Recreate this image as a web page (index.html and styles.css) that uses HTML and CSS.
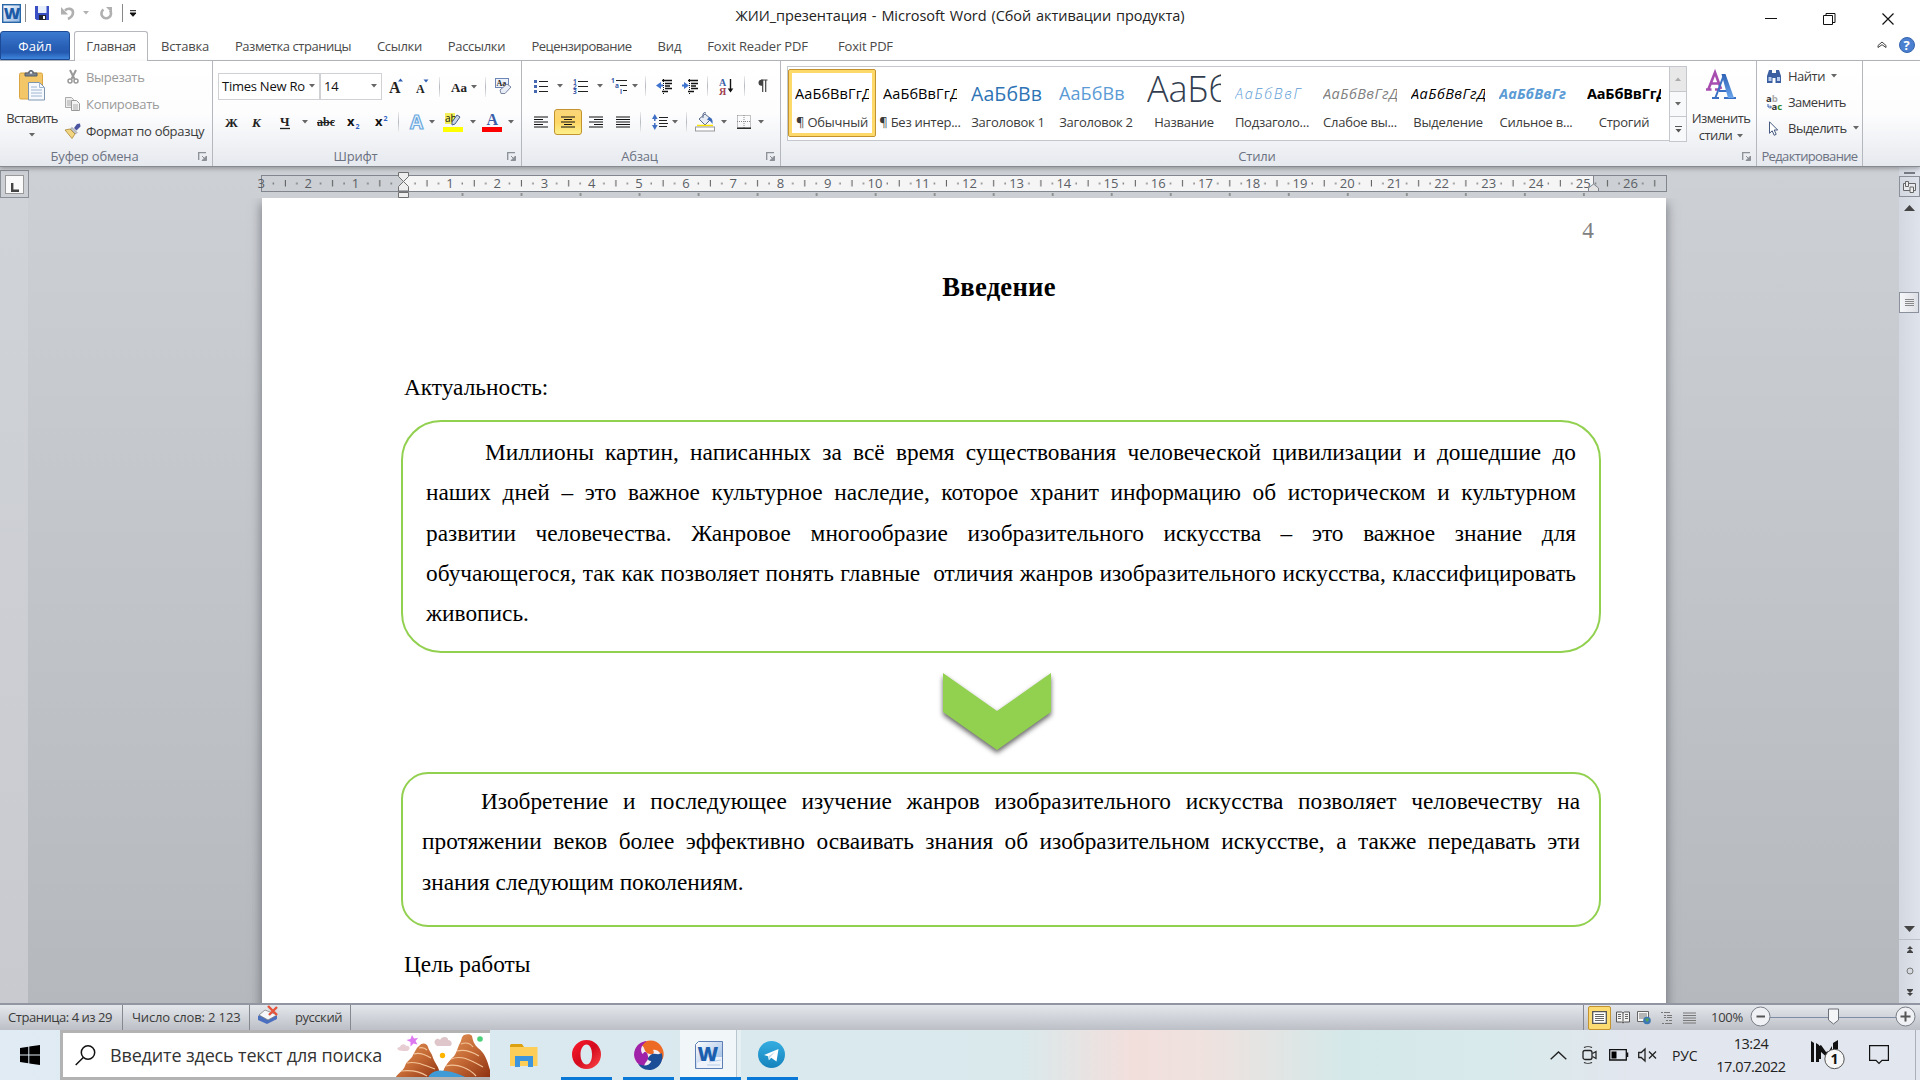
FILE: index.html
```html
<!DOCTYPE html>
<html lang="ru">
<head>
  <meta charset="UTF-8">
  <title>ЖИИ_презентация - Microsoft Word</title>
  <link rel="stylesheet" href="styles.css">
</head>
<body>
  <svg class="defs" width="0" height="0">
    <defs>
      <symbol id="caret" viewBox="0 0 6 4"><path d="M0 0h6L3 3.6z" fill="#666"/></symbol>
      <symbol id="launcher" viewBox="0 0 9 9"><path d="M.7 8V.7H8" fill="none" stroke="#8b8f96" stroke-width="1.3"/><path d="M4 4l3 3M8.5 4v4.5H4z" stroke="#8b8f96" fill="#8b8f96"/></symbol>
      <linearGradient id="wg" x1="0" y1="0" x2="1" y2="1"><stop offset="0" stop-color="#fff"/><stop offset="1" stop-color="#8fb3e0"/></linearGradient>
      <linearGradient id="rock" x1="0" y1="0" x2="1" y2="1"><stop offset="0" stop-color="#e59a5e"/><stop offset=".5" stop-color="#c56a35"/><stop offset="1" stop-color="#8c2f10"/></linearGradient>
      <linearGradient id="tg" x1="0" y1="0" x2="0" y2="1"><stop offset="0" stop-color="#35ade1"/><stop offset="1" stop-color="#1583bd"/></linearGradient>
      <linearGradient id="blueA" x1="0" y1="0" x2="0" y2="1"><stop offset="0" stop-color="#2f62b5"/><stop offset="1" stop-color="#6aa5ec"/></linearGradient>
      <linearGradient id="op" x1="0" y1="0" x2="1" y2="1"><stop offset="0" stop-color="#ff1b2d"/><stop offset=".5" stop-color="#d40a1e"/><stop offset="1" stop-color="#ff4a4a"/></linearGradient>
    </defs>
  </svg>

  <!-- Title bar -->
  <header class="titlebar">
    <div class="quick">
      <svg width="19" height="19" viewBox="0 0 19 19"><rect x=".7" y=".7" width="17.6" height="17.6" fill="url(#wg)" stroke="#2866a8" stroke-width="1.4"/><text x="1.800" y="15" class="wlogo">W</text></svg>
      <i class="vline"></i>
      <svg width="14" height="14" viewBox="0 0 14 14"><path d="M0 0h14v14H1.500L0 12.500z" fill="#3b4fc4"/><rect x="3" y="0" width="8.500" height="7" fill="#e8effc"/><rect x="4" y="9" width="7" height="5" fill="#20242e"/><rect x="8" y="10" width="2" height="3" fill="#fff"/></svg>
      <svg width="14" height="14" viewBox="0 0 14 14"><path d="M4 4.500c3-3 8-2 8 2 0 3-2 5-5 6.500" fill="none" stroke="#b0b0b0" stroke-width="2.600"/><path d="M0 1v7.500h7z" fill="#b0b0b0"/></svg>
      <svg width="6" height="4"><use href="#caret" opacity=".5"/></svg>
      <svg width="13" height="13" viewBox="0 0 13 13"><path d="M3.500 2.500a4.800 4.800 0 1 0 6.500 1" fill="none" stroke="#b0b0b0" stroke-width="2.600"/><path d="M6 0h6v6z" fill="#b0b0b0"/></svg>
      <i class="vline"></i>
      <svg width="8" height="7" viewBox="0 0 8 7"><path d="M1 .7h6M1 3h6L4 6.300z" fill="#111" stroke="#111"/></svg>
    </div>
    <div class="title">ЖИИ_презентация - Microsoft Word (Сбой активации продукта)</div>
    <div class="winbtns">
      <svg width="12" height="12"><path d="M0 5.500h12" stroke="#111"/></svg>
      <svg width="13" height="12"><path d="M.5 2.500h9v9h-9zM3 2.500V.5h9v9H9.500" fill="none" stroke="#111"/></svg>
      <svg width="12" height="12"><path d="M.5.5l11 11M11.500.5l-11 11" stroke="#111" stroke-width="1.200"/></svg>
    </div>
  </header>

  <nav class="tabs">
    <span class="tab file">Файл</span>
    <span class="tab active">Главная</span>
    <span class="tab t1">Вставка</span>
    <span class="tab t2">Разметка страницы</span>
    <span class="tab t3">Ссылки</span>
    <span class="tab t4">Рассылки</span>
    <span class="tab t5">Рецензирование</span>
    <span class="tab t6">Вид</span>
    <span class="tab t7">Foxit Reader PDF</span>
    <span class="tab t8">Foxit PDF</span>
    <div class="help">
      <svg width="10" height="8" viewBox="0 0 10 8"><path d="M1 4.500L5 1l4 3.500v2L5 3.700 1 6.500z" fill="#fff" stroke="#444"/></svg>
      <svg width="16" height="16" viewBox="0 0 16 16"><circle cx="8" cy="8" r="7.500" fill="#4a80cf" stroke="#3766b0"/><text x="4.600" y="12.800" class="qmark">?</text></svg>
    </div>
  </nav>

  <!-- Ribbon -->
  <section class="ribbon">
    <div class="group clipboard">
      <div class="body">
        <div class="paste">
          <svg width="27" height="31" viewBox="0 0 27 31"><rect x=".5" y="3" width="23" height="26" rx="1.500" fill="#f3c768" stroke="#d9a441"/><path d="M6 6V3h3.500a2.500 2.500 0 0 1 5 0H18v3z" fill="#7b8591" stroke="#555d68"/><circle cx="12" cy="2.800" r="1" fill="#fff"/><path d="M9.500 12.500h11l5 5V30h-16z" fill="#f6f9fd" stroke="#7f95ad"/><path d="M20.500 12.500v5h5M12 17h6M12 20h11M12 23h11M12 26h11" fill="none" stroke="#9fb6d0"/></svg>
          <span>Вставить</span>
          <svg width="6" height="4"><use href="#caret"/></svg>
        </div>
        <div class="clip-list">
          <div class="off"><svg width="16" height="16" viewBox="0 0 16 16"><path d="M5 1l4.500 9M11 1L6.500 10" stroke="#999" stroke-width="2" fill="none"/><circle cx="5" cy="12" r="2" fill="none" stroke="#999" stroke-width="1.500"/><circle cx="11" cy="12" r="2" fill="none" stroke="#999" stroke-width="1.500"/></svg><span>Вырезать</span></div>
          <div class="off"><svg width="16" height="16" viewBox="0 0 16 16"><path d="M.5 1.500h6l2 2v8h-8z" fill="#eee" stroke="#aaa"/><path d="M6.500 4.500h5l3 3v7h-8z" fill="#f4f4f4" stroke="#999"/><path d="M2 5h4M2 7h4M2 9h4M8 9h5M8 11h5M8 13h5" stroke="#aaa"/></svg><span>Копировать</span></div>
          <div><svg width="16" height="16" viewBox="0 0 16 16"><path d="M9 5l3-4 3-.5.5 3-4 4z" fill="#4b55a0"/><path d="M7 4.500l5 5-1.500 1.500-5-5z" fill="#c9cdd6" stroke="#666" stroke-width=".6"/><path d="M0 7l5-1 5 5-3 4.500z" fill="#f2d580" stroke="#a98636" stroke-width=".8"/></svg><span>Формат по образцу</span></div>
        </div>
      </div>
      <div class="caption"><span>Буфер обмена</span><svg width="9" height="9"><use href="#launcher"/></svg></div>
    </div>

    <div class="group font">
      <div class="body rows">
        <div class="frow1">
          <div class="combo"><span>Times New Ro</span><svg width="6" height="4"><use href="#caret"/></svg></div>
          <div class="combo small"><span>14</span><svg width="6" height="4"><use href="#caret"/></svg></div>
          <svg width="16" height="18" viewBox="0 0 16 18"><text x="0" y="15" class="sb f16">A</text><path d="M9 3.500h5L11.500.5z" fill="#2f5fb3"/></svg>
          <svg width="14" height="18" viewBox="0 0 14 18"><text x="0" y="15" class="sb f12">A</text><path d="M7.500 1.500h5l-2.500 3z" fill="#2f5fb3"/></svg>
          <i class="sep"></i>
          <svg width="18" height="16" viewBox="0 0 18 16"><text x="0" y="13" class="sb f13">Aa</text></svg>
          <svg width="6" height="4"><use href="#caret"/></svg>
          <i class="sep"></i>
          <svg width="18" height="17" viewBox="0 0 18 17"><rect x=".5" y=".5" width="13" height="9" fill="#eef3fb" stroke="#6d86b5"/><text x="1.500" y="8.300" class="sb f8">Aa</text><path d="M5 12l7-6 4 3-6 6.500H6z" fill="#e9edf5" stroke="#7a86a0"/></svg>
        </div>
        <div class="frow2">
          <svg width="16" height="16" viewBox="0 0 16 16"><text x="0" y="12.500" class="sb f13">Ж</text></svg>
          <svg width="16" height="16" viewBox="0 0 16 16"><text x="0" y="12.500" class="sb f13 it">К</text></svg>
          <svg width="14" height="16" viewBox="0 0 14 16"><text x="0" y="12" class="sb f13">Ч</text><path d="M0 14.500h10" stroke="#222" stroke-width="1.300"/></svg>
          <svg width="6" height="4"><use href="#caret"/></svg>
          <svg width="18" height="16" viewBox="0 0 18 16"><text x="0" y="12" class="sb f11">abc</text><path d="M0 8.500h17" stroke="#222"/></svg>
          <svg width="14" height="16" viewBox="0 0 14 16"><text x="0" y="12" class="xb">x</text><text x="8.500" y="15" class="idx">2</text></svg>
          <svg width="14" height="16" viewBox="0 0 14 16"><text x="0" y="12" class="xb">x</text><text x="8.500" y="7" class="idx">2</text></svg>
          <i class="sep"></i>
          <svg width="16" height="17" viewBox="0 0 16 17"><text x="1" y="15" class="glow">A</text></svg>
          <svg width="6" height="4"><use href="#caret"/></svg>
          <svg width="20" height="20" viewBox="0 0 20 20"><rect x="2" y="1" width="10" height="11" fill="#f3ef5a"/><text x="2" y="10" class="hl">ab</text><path d="M9 10l5-7 3 2-5 7-3 1z" fill="#cbd8ec" stroke="#4a5e85"/><rect x="0" y="15" width="20" height="5" fill="#ff0"/></svg>
          <svg width="6" height="4"><use href="#caret"/></svg>
          <svg width="20" height="20" viewBox="0 0 20 20"><text x="4.500" y="12.500" class="sb f16 blue">A</text><rect x="0" y="15" width="20" height="5" fill="#f00"/></svg>
          <svg width="6" height="4"><use href="#caret"/></svg>
        </div>
      </div>
      <div class="caption"><span>Шрифт</span><svg width="9" height="9"><use href="#launcher"/></svg></div>
    </div>

    <div class="group para">
      <div class="body rows">
        <div class="prow1">
          <svg width="14" height="14" viewBox="0 0 14 14"><path d="M5 2.500h9M5 7.500h9M5 12.500h9" stroke="#222"/><path d="M0 1h3v3H0zM0 6h3v3H0zM0 11h3v3H0z" fill="#4668b0"/></svg>
          <svg width="6" height="4"><use href="#caret"/></svg>
          <svg width="15" height="15" viewBox="0 0 15 15"><path d="M5 2.500h10M5 7.500h10M5 12.500h10" stroke="#222"/><text x="0" y="4.500" class="num">1</text><text x="0" y="9.700" class="num">2</text><text x="0" y="15" class="num">3</text></svg>
          <svg width="6" height="4"><use href="#caret"/></svg>
          <svg width="17" height="16" viewBox="0 0 17 16"><path d="M5 2.500h11M9 7.500h7M12 12.500h4" stroke="#222"/><text x="0" y="5" class="num">1</text><text x="4" y="10" class="num">a</text><text x="9" y="15.500" class="num">i</text></svg>
          <svg width="6" height="4"><use href="#caret"/></svg>
          <i class="sep"></i>
          <svg width="16" height="15" viewBox="0 0 16 15"><path d="M6 1.500h10M9 4.500h7M9 7h5M9 9.500h7M6 12.500h6" stroke="#111" stroke-width="1.500"/><path d="M7.500 0v15" stroke="#111" stroke-dasharray="1 1"/><path d="M5 3L0 6.500 5 10z" fill="#3f74cf"/><path d="M4 6.500h3" stroke="#3f74cf" stroke-width="2"/></svg>
          <svg width="16" height="15" viewBox="0 0 16 15"><path d="M6 1.500h10M9 4.500h7M9 7h5M9 9.500h7M6 12.500h6" stroke="#111" stroke-width="1.500"/><path d="M7.500 0v15" stroke="#111" stroke-dasharray="1 1"/><path d="M2 3l5 3.500L2 10z" fill="#3f74cf"/><path d="M0 6.500h3" stroke="#3f74cf" stroke-width="2"/></svg>
          <i class="sep"></i>
          <svg width="15" height="17" viewBox="0 0 15 17"><text x="0" y="8" class="sb f10 blue">А</text><text x="0" y="16.500" class="sb f10 red">Я</text><path d="M11.500 1v12" stroke="#111" stroke-width="1.400"/><path d="M8.700 10.500h5.600l-2.800 4z" fill="#111"/></svg>
          <i class="sep"></i>
          <svg width="11" height="14" viewBox="0 0 11 14"><path d="M4.500.8a3 3 0 0 0 0 6H6v-6z" fill="#444"/><path d="M4 1h6.500M5.700 1v12M8.700 1v12" fill="none" stroke="#444" stroke-width="1.200"/></svg>
        </div>
        <div class="prow2">
          <svg width="14" height="13" viewBox="0 0 14 13"><path d="M0 1h14M0 3.500h9M0 6h14M0 8.500h9M0 11h14" stroke="#111" stroke-width="1.200"/></svg>
          <span class="pressed"><svg width="14" height="13" viewBox="0 0 14 13"><path d="M0 1h14M3 3.500h8M0 6h14M3 8.500h8M0 11h14" stroke="#111" stroke-width="1.200"/></svg></span>
          <svg width="14" height="13" viewBox="0 0 14 13"><path d="M0 1h14M5 3.500h9M0 6h14M5 8.500h9M0 11h14" stroke="#111" stroke-width="1.200"/></svg>
          <svg width="14" height="13" viewBox="0 0 14 13"><path d="M0 1h14M0 3.500h14M0 6h14M0 8.500h14M0 11h14" stroke="#111" stroke-width="1.200"/></svg>
          <i class="sep"></i>
          <svg width="16" height="16" viewBox="0 0 16 16"><path d="M7 3.500h9M7 6.500h8M7 9.500h9M7 12.500h8" stroke="#222"/><path d="M0 5l2.800-5 2.800 5zM0 11l2.800 5 2.800-5z" fill="#3f6fc4"/><path d="M2.800 4v8" stroke="#3f6fc4" stroke-width="1.500" stroke-dasharray="3 2"/></svg>
          <svg width="6" height="4"><use href="#caret"/></svg>
          <i class="sep"></i>
          <svg width="20" height="20" viewBox="0 0 20 20"><path d="M4 7l6-5 6 5-6 6z" fill="#e7ebf3" stroke="#5a6a8c"/><path d="M8 6V2a2 2 0 0 1 3-1" fill="none" stroke="#5a6a8c"/><path d="M14 5c3 1 4 3 3.500 7-1.500-2-2.500-4-5.500-4z" fill="#3d6bb8"/><path d="M2 13.500h16" stroke="#ffe600" stroke-width="1.500"/><rect x=".5" y="15" width="19" height="4" fill="#fff" stroke="#999"/></svg>
          <svg width="6" height="4"><use href="#caret"/></svg>
          <svg width="14" height="14" viewBox="0 0 14 14"><path d="M.5.500h13v12M.5.500v12M7 0v13M0 6.500h13" fill="none" stroke="#888" stroke-dasharray="1 1"/><path d="M0 13.200h14" stroke="#222" stroke-width="1.500"/></svg>
          <svg width="6" height="4"><use href="#caret"/></svg>
        </div>
      </div>
      <div class="caption"><span>Абзац</span><svg width="9" height="9"><use href="#launcher"/></svg></div>
    </div>

    <div class="group styles">
      <div class="body">
        <div class="gallery">
          <div class="style on"><b class="pv">АаБбВвГгД</b><span>¶ Обычный</span></div>
          <div class="style"><b class="pv">АаБбВвГгД</b><span>¶ Без интер...</span></div>
          <div class="style"><b class="pv h1">АаБбВв</b><span>Заголовок 1</span></div>
          <div class="style"><b class="pv h2">АаБбВв</b><span>Заголовок 2</span></div>
          <div class="style"><b class="pv name">АаБб</b><span>Название</span></div>
          <div class="style"><b class="pv sub">АаБбВвГ</b><span>Подзаголо...</span></div>
          <div class="style"><b class="pv weak">АаБбВвГгД</b><span>Слабое вы...</span></div>
          <div class="style"><b class="pv em">АаБбВвГгД</b><span>Выделение</span></div>
          <div class="style"><b class="pv strong">АаБбВвГг</b><span>Сильное в...</span></div>
          <div class="style"><b class="pv strict">АаБбВвГгД</b><span>Строгий</span></div>
        </div>
        <div class="scroller">
          <i class="dim"><svg width="6" height="4" viewBox="0 0 6 4"><path d="M0 4h6L3 .4z" fill="#aaa"/></svg></i>
          <i><svg width="6" height="4"><use href="#caret"/></svg></i>
          <i><svg width="7" height="7" viewBox="0 0 7 7"><path d="M0 .5h7" stroke="#555"/><path d="M.5 3h6l-3 3.600z" fill="#555"/></svg></i>
        </div>
        <div class="change">
          <svg width="30" height="29" viewBox="0 0 30 29"><path d="M0 18.500h5.500M9 18.500h5M2.500 18L9 1.500 15 18M5 12.500h7" fill="none" stroke="#a84db0" stroke-width="2.600"/><path d="M6 27h7M18 27h12M9.500 26.500L17.500 5M13 20h9" fill="none" stroke="#3a70c4" stroke-width="2"/><path d="M15.500 3h4l8.500 24h-6z" fill="url(#blueA)"/></svg>
          <span>Изменить</span>
          <span>стили <svg width="6" height="4"><use href="#caret"/></svg></span>
        </div>
      </div>
      <div class="caption"><span>Стили</span><svg width="9" height="9"><use href="#launcher"/></svg></div>
    </div>

    <div class="group edit">
      <div class="body edit-list">
        <div><svg width="16" height="15" viewBox="0 0 16 15"><path d="M3 1h3v3h4V1h3l2 6v7H9.500V9h-3v5H1V7z" fill="#3b5fa0"/><path d="M2.500 8h3v4h-3zM11 8h3v4h-3z" fill="#b9cdec"/></svg><span>Найти</span><svg width="6" height="4"><use href="#caret"/></svg></div>
        <div><svg width="16" height="15" viewBox="0 0 16 15"><text x="0" y="6.500" class="rep">a<tspan fill="#aaa">b</tspan></text><text x="5.500" y="14.500" class="rep">a<tspan fill="#2d8a2d">c</tspan></text><path d="M2 9v3h3M4 10.500L5.500 12 4 13.500" fill="none" stroke="#3560b0"/></svg><span>Заменить</span></div>
        <div><svg width="16" height="15" viewBox="0 0 16 15"><path d="M3.500.8v11.500l2.700-2.500 2 4.500 2-1-2-4.300h3.500z" fill="#fff" stroke="#45597f"/></svg><span>Выделить</span><svg width="6" height="4"><use href="#caret"/></svg></div>
      </div>
      <div class="caption"><span>Редактирование</span></div>
    </div>
  </section>

  <!-- Document area -->
  <main class="workspace">
    <div class="leftcol">
      <div class="tabstop"><i><svg width="8" height="9"><path d="M1.200 0v7.700H8" fill="none" stroke="#444" stroke-width="2.400"/></svg></i></div>
      <div class="vruler"></div>
    </div>
    <div class="center">
      <div class="rulerwrap">
        <svg class="rulerbar" width="1420" height="31" viewBox="248 167 1420 31">
          <defs><pattern id="ticks" x="403" y="175" width="47.22" height="17" patternUnits="userSpaceOnUse"><path d="M12 7.500v2M24 5v6.500M35.500 7.500v2" stroke="#555"/></pattern>
          <pattern id="tabsteps" x="433" y="192" width="59.020" height="6" patternUnits="userSpaceOnUse"><path d="M29.500 1v3" stroke="#555"/></pattern></defs>
          <rect x="403" y="175.500" width="1190" height="16" fill="#f5f5f6"/>
          <rect x="261.500" y="175.500" width="1405" height="16" fill="none" stroke="#80858e"/>
          <rect x="264" y="175" width="1394" height="17" fill="url(#ticks)"/>
          <rect x="455" y="192" width="1140" height="6" fill="url(#tabsteps)"/>
          <path d="M1593.500 175v16" stroke="#80858e"/>
        </svg>
        <div class="nums"><span>3</span><span>2</span><span>1</span><span></span><span>1</span><span>2</span><span>3</span><span>4</span><span>5</span><span>6</span><span>7</span><span>8</span><span>9</span><span>10</span><span>11</span><span>12</span><span>13</span><span>14</span><span>15</span><span>16</span><span>17</span><span>18</span><span>19</span><span>20</span><span>21</span><span>22</span><span>23</span><span>24</span><span>25</span><span>26</span></div>
        <svg class="rulerbar" width="1420" height="31" viewBox="248 167 1420 31"><path d="M398.500 172.500h10v4l-5 5-5-5zM403.500 181.500l5 5v4.500h-10v-4.500zM398.500 192.500h10v5h-10z" fill="#eee" stroke="#707070"/><path d="M1593.500 184l5 4v3.500h-10V188z" fill="#e4e4e4" stroke="#80858e"/></svg>
      </div>
      <div class="page">
        <div class="pageno">4</div>
        <h1>Введение</h1>
        <p class="lead">Актуальность:</p>
        <div class="box box1">
          <div class="ln first">Миллионы картин, написанных за всё время существования человеческой цивилизации и дошедшие до</div>
          <div class="ln">наших дней – это важное культурное наследие, которое хранит информацию об историческом и культурном</div>
          <div class="ln">развитии человечества. Жанровое многообразие изобразительного искусства – это важное знание для</div>
          <div class="ln">обучающегося, так как позволяет понять главные &nbsp;отличия жанров изобразительного искусства, классифицировать</div>
          <div class="ln last">живопись.</div>
        </div>
        <svg class="arrow" width="130" height="95" viewBox="0 0 130 95"><path d="M11 10l54 38 54-38v39l-54 38-54-38z" fill="#92d050"/></svg>
        <div class="box box2">
          <div class="ln first">Изобретение и последующее изучение жанров изобразительного искусства позволяет человечеству на</div>
          <div class="ln">протяжении веков более эффективно осваивать знания об изобразительном искусстве, а также передавать эти</div>
          <div class="ln last">знания следующим поколениям.</div>
        </div>
        <p class="goal">Цель работы</p>
      </div>
    </div>
    <div class="vscroll">
      <i class="split"></i>
      <div class="rulerbtn"><svg width="13" height="12" viewBox="0 0 13 12"><path d="M.5 2.500h12v7H.5z" fill="#e9eaee" stroke="#666"/><path d="M2.500.500h3v5h-3zM7 6h3.500v5.500H7z" fill="#eee" stroke="#666"/></svg></div>
      <svg class="up" width="11" height="6"><path d="M0 6L5.500 0 11 6z" fill="#444"/></svg>
      <div class="thumb"><svg width="9" height="8"><path d="M0 .5h9M0 2.500h9M0 4.500h9M0 6.500h9" stroke="#888"/></svg></div>
      <svg class="down" width="11" height="6"><path d="M0 0h11L5.500 6z" fill="#444"/></svg>
      <div class="browse">
        <svg width="6" height="7"><path d="M0 3l3-3 3 3zM0 6l3-3 3 3zM0 6h6v1H0z" fill="#444"/></svg>
        <svg width="8" height="8"><circle cx="4" cy="4" r="3" fill="#d5d8de" stroke="#777"/></svg>
        <svg width="6" height="7"><path d="M0 4l3 3 3-3zM0 1l3 3 3-3zM0 0h6v1H0z" fill="#444"/></svg>
      </div>
    </div>
  </main>

  <footer class="status">
    <span class="st pg">Страница: 4 из 29</span>
    <span class="st wc">Число слов: 2 123</span>
    <span class="st lang"><svg width="21" height="19" viewBox="0 0 21 19"><path d="M0 11l7-5 4 2 8 3v3l-10 5-9-4z" fill="#4a6fc0"/><path d="M1 10l6-5 5 2 7 3-9 5z" fill="#f5f7fb" stroke="#777" stroke-width=".7"/><path d="M10 1l9 9M19 2l-8 8" stroke="#e5533a" stroke-width="2.400"/></svg><em>русский</em></span>
    <div class="views">
      <span class="vbtn"><svg width="15" height="13" viewBox="0 0 15 13"><path d="M.7.700h13.600v11.600H.7z" fill="#fff" stroke="#555" stroke-width="1.300"/><path d="M3 3.500h9M3 5.500h9M3 7.500h9M3 9.500h9" stroke="#666"/></svg></span>
      <svg width="14" height="13" viewBox="0 0 14 13"><path d="M.5 1h5L7 2l1.500-1h5v10h-5L7 12l-1.500-1h-5zM7 2v10" fill="#f3f3f3" stroke="#555"/><path d="M2 3.500h3M2 5.500h3M2 7.500h3M9 3.500h3M9 5.500h3M9 7.500h3" stroke="#666"/></svg>
      <svg width="15" height="14" viewBox="0 0 15 14"><path d="M.5.500h11v10H.5z" fill="#f6f6f6" stroke="#666"/><path d="M2 3h8M2 5h8M2 7h6" stroke="#777"/><circle cx="10" cy="9.500" r="3.800" fill="#3b78b5"/><path d="M8 8l3-1 1 2-2 2z" fill="#56a356"/></svg>
      <svg width="12" height="12" viewBox="0 0 12 12"><path d="M0 .5h2M3 .5h6M3 3.500h2M6 3.500h5M3 5.500h2M6 5.500h5M5 8.500h2M8 8.500h3M1 11.500h2M4 11.500h7" stroke="#777"/></svg>
      <svg width="13" height="12" viewBox="0 0 13 12"><path d="M0 1h13M0 3.500h13M0 6h13M0 8.500h13M0 11h13" stroke="#777"/></svg>
    </div>
    <span class="pct">100%</span>
    <svg class="zoom" width="170" height="26" viewBox="0 0 170 26"><path d="M22 12.500h126" stroke="#7d8da5"/><circle cx="12.500" cy="11.500" r="9.500" fill="#f0f1f4" stroke="#7a7f88"/><path d="M8.500 11.500h8.500" stroke="#555" stroke-width="2"/><circle cx="157.500" cy="11.500" r="9.500" fill="#f0f1f4" stroke="#7a7f88"/><path d="M152.500 11.500h10M157.500 6.500v10" stroke="#555" stroke-width="2"/><path d="M80.500 4h10v11l-5 4-5-4z" fill="#f4f5f7" stroke="#6c7078"/></svg>
  </footer>

  <!-- Taskbar -->
  <div class="taskbar">
    <div class="start"><svg width="20" height="20" viewBox="0 0 20 20"><path d="M0 3l8.300-1.200v7.700H0zM9.300 1.600L20 0v9.500H9.300zM0 10.500h8.300v7.700L0 17zM9.300 10.500H20V20L9.300 18.400z"/></svg></div>
    <div class="search">
      <svg width="21" height="21" viewBox="0 0 21 21"><circle cx="13" cy="7.500" r="6.700" fill="none" stroke="#111" stroke-width="1.500"/><path d="M8.300 12.500L.7 20" stroke="#111" stroke-width="1.500"/></svg>
      <span>Введите здесь текст для поиска</span>
      <svg class="art" width="95" height="47" viewBox="0 0 95 47">
        <path d="M9 19c-8 0-8-4-4-4 1-4 6-3 6-1 4-1 5 4 1 5z" fill="#e6ced2"/>
        <path d="M40 12c-2-4 3-7 5-4 2-5 9-3 8 0 4 0 5 5 2 6H42z" fill="#dfc6ca"/>
        <path d="M17 3l2 3.500 4-.5-2.500 3 2 3.500-4-1-3 3v-4.500L11.500 8l4-1z" fill="#dc78f0"/>
        <circle cx="85" cy="7" r="2.800" fill="#4bd07a"/><circle cx="47.500" cy="23.500" r="2.700" fill="#ffb400"/>
        <path d="M0 47c2-6 8-7 10-13 2-6 6-6 8-11 2-3 3-7 6-9 3-4 8-3 9 1 1 4 4 6 5 11 2 5 5 8 6 12v9z" fill="url(#rock)"/>
        <path d="M47 47c0-11 6-16 10-21 5-4 5-10 8-15 2-3 1-6 4-8 3-1 7-1 8 1 1 5 2 8 6 12 7 5 9 12 12 22v9z" fill="url(#rock)"/>
        <path d="M24 16c4-1 6 0 8 2M19 22c6-2 12 1 17 4M12 31c9-2 17 2 28 6M6 39c8-1 18 0 26 5M66 12c5-2 9-1 12 3M62 19c8-2 14 0 22 5M56 27c10-4 18 0 32 8M51 34c12-3 24 3 30 10" fill="none" stroke="#f3c398" stroke-width="1.200"/>
        <path d="M33 47c1-7 9-10 18-8 8 1 16 4 23 8z" fill="#3f9ad6"/>
      </svg>
    </div>
    <div class="apps">
      <div class="app"><svg width="28" height="25" viewBox="0 0 28 25"><path d="M0 2.500A1.500 1.500 0 0 1 1.500 1H12l2 3H0z" fill="#dda010"/><rect x="0" y="4" width="27.500" height="19" fill="#fdcf59"/><path d="M5 24V13h18v11h-5v-6h-8v6z" fill="#3d95dd"/></svg></div>
      <div class="app run"><svg width="29" height="29" viewBox="0 0 29 29"><path fill-rule="evenodd" d="M14.500 0a14.500 14.500 0 1 0 0 29 14.500 14.500 0 0 0 0-29zm0 4.500c3.500 0 5.500 4.500 5.500 10s-2 10-5.500 10-6-4.500-6-10 2.500-10 6-10z" fill="url(#op)"/></svg></div>
      <div class="app run">
        <svg width="30" height="30" viewBox="-15 -15 30 30">
          <circle r="14.800" fill="#f3ecf0"/>
          <path d="M-8-10C-3-16 7-16 12-9c4 6 3 11 1 14 0-6-4-11-9-10 2 3 0 5-3 4C-6-2-3-8-8-10z" fill="#ec6a24"/>
          <path d="M-8-10C-3-16 7-16 12-9c4 6 3 11 1 14 0-6-4-11-9-10 2 3 0 5-3 4C-6-2-3-8-8-10z" fill="#a022a8" transform="rotate(-120)"/>
          <path d="M-8-10C-3-16 7-16 12-9c4 6 3 11 1 14 0-6-4-11-9-10 2 3 0 5-3 4C-6-2-3-8-8-10z" fill="#1c4e97" transform="rotate(120)"/>
        </svg>
      </div>
      <div class="app run current"><svg width="28" height="28" viewBox="0 0 28 28"><path d="M3.500.500h24v27H.5v-24z" fill="url(#wg)" stroke="#5d7fb3"/><path d="M14 16h13v11H2V22z" fill="#eef3fb"/><path d="M15 17l11-3M14 21l12-2M12 24l13 0" stroke="#b8cdea"/><text x="2.500" y="19.500" class="wbig">W</text></svg></div>
      <div class="app run tele"><svg width="27" height="27" viewBox="0 0 27 27"><circle cx="13.500" cy="13.500" r="13.500" fill="url(#tg)"/><path d="M6 14L20.500 8 18.500 20.500l-5.300-3.700-2.300 2.500-.9-4z" fill="#fff"/><path d="M10.500 15.300l7-5-5.300 6-1.200 2.500z" fill="#bcdcee"/></svg></div>
    </div>
    <div class="tray">
      <svg width="17" height="9"><path d="M.7 8.300L8.500 1l7.800 7.300" fill="none" stroke="#222" stroke-width="1.400"/></svg>
      <svg width="15" height="18" viewBox="0 0 15 18"><rect x="1" y="4.500" width="9" height="9" rx="2" fill="none" stroke="#222" stroke-width="1.300"/><path d="M10.500 7.500l3.500-2v7l-3.500-2M2 1.500C4 .5 8 .5 10 1.500M2 16.500c2 1 6 1 8 0" fill="none" stroke="#222" stroke-width="1.200"/></svg>
      <svg width="20" height="12" viewBox="0 0 20 12"><path d="M.7.700h16.600v10.300H.7z" fill="none" stroke="#111" stroke-width="1.300"/><path d="M18.500 3.500v4.500" stroke="#111" stroke-width="1.500"/><rect x="2.500" y="2.500" width="5" height="7"/></svg>
      <svg width="20" height="14" viewBox="0 0 20 14"><path d="M.7 4.500h2.500L7 1v12L3.200 9.500H.7z" fill="none" stroke="#222" stroke-width="1.300"/><path d="M11 3.500l7 7M18 3.500l-7 7" stroke="#222" stroke-width="1.300"/></svg>
      <span class="kb">РУС</span>
      <div class="clock"><span>13:24</span><span>17.07.2022</span></div>
      <svg width="34" height="30" viewBox="0 0 34 30"><path d="M0 1l3 2v19H0zM5 3l3 2v17H5zM10 5l5 7 3-1 3-5v5l-2 9-9-8v7h-2V6zM22 3l5-3v9l-5 4z" fill="#111"/><circle cx="23.500" cy="19" r="9.700" fill="#f7f7f7" stroke="#555"/><text x="19.600" y="24.300" class="badge">1</text></svg>
      <svg width="20" height="20" viewBox="0 0 20 20"><path d="M.6.600h18.800v14.800h-6.400L10 18.500 7 15.400H.6z" fill="none" stroke="#111" stroke-width="1.200"/></svg>
      <i class="desk"></i>
    </div>
  </div>
</body>
</html>
```
FILE: styles.css
```css
* {
  box-sizing: border-box;
}
body {
  margin: 0;
  width: 1920px;
  height: 1080px;
  overflow: hidden;
  display: flex;
  flex-direction: column;
  background: #fff;
  font-family: "Open Sans", "Noto Sans", sans-serif;
  font-size: 13px;
  color: #3b3b3b;
  white-space: nowrap;
}
svg {
  display: block;
  flex: none;
  overflow: visible;
}
.defs {
  height: 0;
}
i, em {
  font-style: normal;
}

/* title bar */
.titlebar {
  height: 31px;
  display: grid;
  grid-template-columns: 560px 800px 560px;
}
.quick {
  display: grid;
  grid-template-columns: 23px 10px 26px 22px 17px 22px 7px 10px;
  align-items: center;
  height: 26px;
  padding-left: 2px;
}
.vline {
  width: 1px;
  height: 18px;
  background: #888;
}
.title {
  text-align: center;
  font-size: 14.5px;
  line-height: 32px;
  letter-spacing: -.05px;
  word-spacing: 1.2px;
  color: #222;
}
.winbtns {
  display: flex;
  justify-content: flex-end;
  align-items: center;
  gap: 46px;
  padding: 5px 26px 0 0;
}
.wlogo {
  font: 800 16px "Open Sans", sans-serif;
  fill: #1c5aa6;
}
.qmark {
  font: bold 13px "Open Sans", sans-serif;
  fill: #fff;
}

/* tabs */
.tabs {
  height: 30px;
  display: flex;
  border-bottom: 1px solid #b5b9be;
}
.tab {
  line-height: 31px;
  flex: none;
  text-align: center;
  color: #4a4a4a;
}
.file {
  width: 70px;
  color: #fff;
  border: 1px solid #1c4a96;
  border-radius: 3px 3px 0 0;
  background: linear-gradient(#3c7bd0, #2a62b8 50%, #2459b0 75%, #3f86dd);
  line-height: 29px;
}
.active {
  width: 74px;
  height: 30px;
  margin-left: 4px;
  border: 1px solid #b5b9be;
  border-bottom: 0;
  border-radius: 3px 3px 0 0;
  background: #fff;
  line-height: 29px;
  letter-spacing: -.3px;
}
.t1 { width: 74px; letter-spacing: -.2px; }
.t2 { width: 142px; letter-spacing: -.45px; }
.t3 { width: 71px; letter-spacing: -.3px; }
.t4 { width: 83px; letter-spacing: -.3px; }
.t5 { width: 127px; letter-spacing: -.55px; }
.t6 { width: 49px; }
.t7 { width: 127px; letter-spacing: -.15px; }
.t8 { width: 89px; letter-spacing: -.2px; }
.help {
  margin-left: auto;
  display: flex;
  align-items: center;
  gap: 12px;
  padding: 0 5px 2px 0;
}

/* ribbon */
.ribbon {
  height: 106px;
  display: flex;
  background: linear-gradient(#fff, #fdfdfe 50%, #e6e9ee);
  border-bottom: 1px solid #868b92;
  box-shadow: 0 2px 4px rgba(0, 0, 0, .25);
  position: relative;
}
.group {
  display: flex;
  flex-direction: column;
  border-right: 1px solid #b4b8be;
}
.clipboard { width: 213px; }
.font { width: 309px; }
.para { width: 259px; }
.styles { width: 976px; }
.edit { width: 106px; }
.body {
  height: 86px;
  display: flex;
}
.caption {
  height: 19px;
  display: flex;
  align-items: center;
  color: #6b7282;
  padding-right: 5px;
  letter-spacing: -.2px;
}
.caption span {
  flex: 1;
  text-align: center;
  line-height: 19px;
  padding: 0 9px 1px 0;
}
.paste {
  width: 64px;
  display: flex;
  flex-direction: column;
  align-items: center;
  padding-top: 9px;
}
.paste span {
  line-height: 20px;
  margin: 7px 0 5px;
  letter-spacing: -.75px;
}
.clip-list {
  padding: 2px 0 0 1px;
  letter-spacing: -.3px;
}
.clip-list div {
  display: flex;
  align-items: center;
  gap: 5px;
  height: 27px;
}
.off {
  color: #9a9a9a;
}
.rows {
  flex-direction: column;
}
.rows > div {
  display: grid;
  align-items: center;
}
.frow1 {
  grid-template-columns: 102px 69px 27px 23px 12px 20px 14px 10px 20px;
  height: 26px;
  margin: 12px 0 0 5px;
}
.frow2 {
  grid-template-columns: 27px 28px 22px 15px 30px 28px 23px 11px 20px 14px 27px 12px 26px 8px;
  height: 26px;
  margin: 10px 0 0 12px;
}
.combo {
  height: 27px;
  width: 102px;
  border: 1px solid #cfd1d4;
  background: #fff;
  display: flex;
  align-items: center;
  justify-content: space-between;
  padding: 0 4px 1px 3px;
  color: #111;
  letter-spacing: -.25px;
}
.small {
  width: 62px;
}
.sep {
  width: 1px;
  height: 20px;
  background: linear-gradient(#eee, #b5b9c0, #eee);
}
.sb {
  font-family: "Liberation Serif", serif;
  font-weight: bold;
  fill: #222;
}
.f16 { font-size: 16px; }
.f13 { font-size: 13px; }
.f12 { font-size: 12px; }
.f11 { font-size: 12px; }
.f10 { font-size: 10px; }
.f8 { font-size: 8px; }
.it { font-style: italic; }
.blue { fill: #3a5fa8; }
.red { fill: #a04050; }
.xb {
  font: bold 13px "Open Sans", sans-serif;
  fill: #111;
}
.idx {
  font: bold 7px "Open Sans", sans-serif;
  fill: #2f62c4;
}
.glow {
  font: bold 19px "Open Sans", sans-serif;
  fill: #e9f3fc;
  stroke: #6aa8de;
  stroke-width: 1.2px;
}
.hl {
  font: 10px "Open Sans", sans-serif;
  fill: #111;
}
.num {
  font: bold 6.5px "Open Sans", sans-serif;
  fill: #3558a5;
}
.prow1 {
  grid-template-columns: 23px 16px 24px 14px 21px 13px 11px 26px 25px 12px 25px 13px 11px;
  height: 26px;
  margin: 12px 0 0 12px;
}
.prow2 {
  grid-template-columns: 20px 35px 27px 24px 12px 20px 14px 9px 26px 16px 21px 8px;
  height: 26px;
  margin: 10px 0 0 12px;
}
.pressed {
  width: 28px;
  height: 26px;
  display: flex;
  align-items: center;
  justify-content: center;
  border: 1px solid #c2932f;
  border-radius: 3px;
  background: linear-gradient(#fbd67a, #fdd766 50%, #fef08a);
}

/* styles gallery */
.gallery {
  display: flex;
  width: 883px;
  height: 75px;
  margin: 5px 0 0 6px;
  padding-top: 2px;
  border: 1px solid #c4c7cb;
  background: #fff;
}
.style {
  width: 88px;
  height: 68px;
  flex: none;
  display: flex;
  flex-direction: column;
  padding: 0 7px;
  text-align: center;
}
.on {
  border: 1px solid #c2932f;
  border-radius: 2px;
  box-shadow: inset 0 0 0 3px #fcd968;
  padding: 0 6px;
}
.pv {
  height: 43px;
  line-height: 49px;
  overflow: hidden;
  text-align: left;
  font-weight: 400;
  font-size: 14.5px;
  letter-spacing: .1px;
  color: #000;
}
.style span {
  line-height: 20px;
  margin: 0 -6px;
  letter-spacing: -.25px;
}
.on .pv { height: 42px; line-height: 47px; }
.h1 { font-size: 19.5px; color: #2e74b5; letter-spacing: .1px; }
.h2 { font-size: 18px; color: #5b9bd5; letter-spacing: .1px; }
.name { font-size: 36px; font-weight: 300; color: #323e4f; line-height: 40px; letter-spacing: -.2px; }
.sub { font-style: italic; font-weight: 300; color: #5b9bd5; letter-spacing: 1.7px; }
.weak { font-style: italic; color: #808080; letter-spacing: .45px; }
.em { font-style: italic; letter-spacing: .45px; }
.strong { font-style: italic; font-weight: bold; color: #5b9bd5; letter-spacing: .1px; }
.strict { font-weight: bold; letter-spacing: -.2px; }
.scroller {
  width: 18px;
  margin: 5px 0 0 -1px;
  height: 75px;
  display: flex;
  flex-direction: column;
}
.scroller i {
  flex: 1;
  display: flex;
  align-items: center;
  justify-content: center;
  border: 1px solid #c4c7cb;
  margin-bottom: -1px;
  background: #f8f9fa;
}
.scroller .dim {
  background: #e8e8e9;
}
.change {
  width: 68px;
  display: flex;
  flex-direction: column;
  align-items: center;
  padding-top: 10px;
  letter-spacing: -.6px;
}
.change span {
  line-height: 17px;
  display: flex;
  align-items: center;
  gap: 5px;
}
.change svg + span {
  margin-top: 10px;
}
.edit-list {
  flex-direction: column;
  padding: 2px 0 0 9px;
  letter-spacing: -.5px;
}
.edit-list div {
  display: flex;
  align-items: center;
  height: 26px;
  gap: 6px;
}
.edit .caption {
  padding: 0;
  letter-spacing: -.65px;
}
.edit .caption span {
  padding-right: 0;
}
.rep {
  font: bold 9.5px "Open Sans", sans-serif;
  letter-spacing: 0;
  fill: #333;
}

/* workspace */
.workspace {
  height: 836px;
  display: grid;
  grid-template-columns: 28px 1871px 21px;
  background: linear-gradient(#cdd0d4, #b5b8bc);
  overflow: hidden;
}
.tabstop {
  width: 29px;
  height: 28px;
  margin: 3px 0 0;
  border: 1px solid #8b9098;
  display: flex;
  align-items: center;
  justify-content: center;
}
.tabstop i {
  width: 19px;
  height: 19px;
  border: 1px solid #999;
  background: #fafafa;
  display: flex;
  padding: 7px 0 0 5px;
}
.vruler {
  height: 805px;
  background: linear-gradient(#d0d3d8, #c8cad0);
}
.rulerwrap {
  display: grid;
  height: 31px;
  padding-left: 220px;
}
.rulerwrap > * {
  grid-area: 1 / 1;
}
.nums {
  display: flex;
  margin-left: -10.5px;
  padding-top: 7px;
}
.nums span {
  width: 47.22px;
  flex: none;
  text-align: center;
  line-height: 19px;
  color: #5a5f66;
}
.page {
  width: 1404px;
  height: 830px;
  margin-left: 234px;
  padding: 0 0 0 139px;
  background: #fff;
  box-shadow: 0 6px 10px 1px rgba(60, 66, 74, .55);
  clip-path: inset(0 -16px);
  font: 23.333px/40.2px "Liberation Serif", serif;
  color: #000;
}
.pageno {
  width: 1193px;
  text-align: right;
  padding-top: 12px;
  color: #808080;
}
.page h1 {
  margin: 17px 0 0;
  width: 1196px;
  text-align: center;
  font-size: 26.667px;
  letter-spacing: .25px;
  line-height: 40px;
}
.page p {
  margin: 0 0 0 3px;
}
.page .lead {
  margin-top: 60px;
  height: 53px;
}
.box {
  width: 1200px;
  border: 2px solid #92d050;
}
.box1 {
  height: 233px;
  border-radius: 40px;
  padding: 10px 23px 0;
}
.box2 {
  height: 155px;
  border-radius: 27px;
  padding: 7px 19px 0;
}
.ln {
  text-align-last: justify;
}
.first {
  padding-left: 59px;
}
.last {
  text-align-last: left;
}
.arrow {
  margin: 10px 0 14px 531px;
  filter: drop-shadow(0 3px 2.5px rgba(0, 0, 0, .6));
}
.page .goal {
  margin-top: 17px;
}

/* scrollbar */
.vscroll {
  background: linear-gradient(90deg, #d3d8e0, #dfe3ec);
  display: flex;
  flex-direction: column;
  align-items: center;
}
.split {
  width: 11px;
  height: 2px;
  margin-top: 5px;
  background: #777c84;
}
.rulerbtn {
  width: 21px;
  height: 21px;
  margin-top: 2px;
  border: 1px solid #8b9098;
  display: flex;
  align-items: center;
  justify-content: center;
}
.up {
  margin-top: 8px;
}
.thumb {
  width: 20px;
  height: 21px;
  margin: 81px 1px 0 0;
  border: 1px solid #8b919c;
  background: linear-gradient(90deg, #f6f7f9, #dcdfe5);
  display: flex;
  align-items: center;
  justify-content: center;
}
.down {
  margin-top: 613px;
}
.browse {
  width: 21px;
  height: 64px;
  margin-top: 7px;
  border-top: 1px solid #b9bec8;
  display: flex;
  flex-direction: column;
  align-items: center;
  gap: 14px;
  padding-top: 6px;
}

/* status bar */
.status {
  height: 27px;
  border-top: 2px solid #9296a3;
  background: linear-gradient(#e4e7ec, #bcbfc5);
  display: flex;
  line-height: 24px;
}
.st {
  border-right: 1px solid #85898f;
}
.pg { width: 123px; padding-left: 8px; letter-spacing: -.45px; }
.wc { width: 127px; padding-left: 9px; letter-spacing: -.15px; }
.lang {
  width: 101px;
  display: flex;
  gap: 16px;
  padding-left: 8px;
  letter-spacing: -.45px;
}
.views {
  margin-left: 1232px;
  border-left: 1px solid #85898f;
  display: grid;
  grid-template-columns: 28px 21px 24px 22px 22px;
  align-items: center;
  padding-left: 4px;
}
.vbtn {
  width: 23px;
  height: 24px;
  display: flex;
  align-items: center;
  justify-content: center;
  border: 1px solid #c2932f;
  border-radius: 2px;
  background: #fddb73;
}
.pct {
  width: 43px;
  padding-left: 6px;
  letter-spacing: -.3px;
}

/* taskbar */
.taskbar {
  height: 50px;
  display: flex;
  background: linear-gradient(90deg, #e0ebf4, #d9e9ef 30%, #d9e9ec 53%, #f2dfdc 59%, #eee2df 63%, #d5e8e9 70%, #d8eaeb 78%, #e2e6ee 85%, #e2e6ee);
  color: #222;
}
.start {
  width: 60px;
  display: flex;
  align-items: center;
  justify-content: center;
}
.search {
  width: 430px;
  height: 50px;
  border: 3px solid #b3b3b3;
  border-right-width: 0;
  background: #fff;
  display: flex;
  align-items: center;
  padding-left: 12px;
  overflow: hidden;
}
.search span {
  width: 285px;
  margin-left: 14px;
  font-size: 18px;
  letter-spacing: -.15px;
  color: #333;
}
.apps {
  display: flex;
  padding-left: 9px;
}
.app {
  width: 51px;
  height: 50px;
  margin-left: 11px;
  display: flex;
  align-items: center;
  justify-content: center;
}
.app:first-child {
  margin-left: -1px;
}
.app:nth-child(2) {
  margin-left: 12px;
}
.run {
  border-bottom: 3px solid #0a78d7;
  padding-top: 2px;
}
.current {
  width: 61px;
  margin-left: 6px;
  padding-right: 4px;
  background: linear-gradient(90deg, #f1f6f9 56px, #b9c6cd 56px, #b9c6cd 57px, #e6f0f3 57px);
}
.tele {
  margin-left: 6px;
  padding-right: 2px;
}
.tray {
  margin-left: auto;
  display: grid;
  grid-template-columns: 32px 27px 29px 34px 40px 99px 58px 46px 5px;
  align-items: center;
}
.kb {
  font-size: 14px;
  letter-spacing: -.1px;
}
.clock {
  width: 78px;
  text-align: center;
  font-size: 14.5px;
  line-height: 23px;
  letter-spacing: -.45px;
}
.clock span {
  display: block;
}
.desk {
  width: 1px;
  height: 50px;
  background: #a9b0b8;
}
.wbig {
  font: 800 20px "Open Sans", sans-serif;
  letter-spacing: -2px;
  fill: #1c5fae;
}
.badge {
  font: bold 14px "Open Sans", sans-serif;
  fill: #111;
}
```
